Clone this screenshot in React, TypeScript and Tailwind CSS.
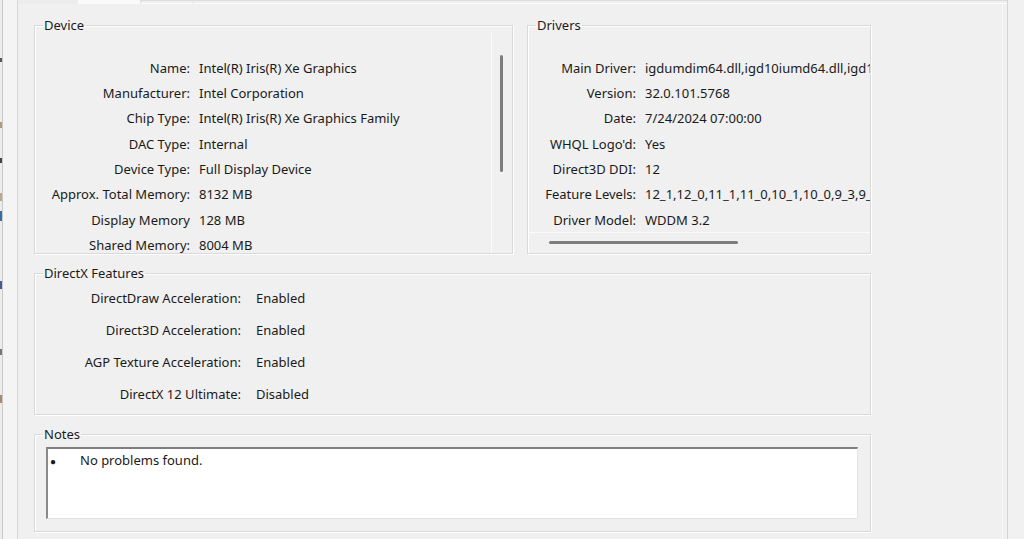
import React from "react";

const deviceRows: [string, string][] = [
  ["Name:", "Intel(R) Iris(R) Xe Graphics"],
  ["Manufacturer:", "Intel Corporation"],
  ["Chip Type:", "Intel(R) Iris(R) Xe Graphics Family"],
  ["DAC Type:", "Internal"],
  ["Device Type:", "Full Display Device"],
  ["Approx. Total Memory:", "8132 MB"],
  ["Display Memory", "128 MB"],
  ["Shared Memory:", "8004 MB"],
];

const driverRows: [string, string][] = [
  ["Main Driver:", "igdumdim64.dll,igd10iumd64.dll,igd10iumd64.dll,igd12umd64.dll"],
  ["Version:", "32.0.101.5768"],
  ["Date:", "7/24/2024 07:00:00"],
  ["WHQL Logo'd:", "Yes"],
  ["Direct3D DDI:", "12"],
  ["Feature Levels:", "12_1,12_0,11_1,11_0,10_1,10_0,9_3,9_2,9_1"],
  ["Driver Model:", "WDDM 3.2"],
];

const featureRows: [string, string][] = [
  ["DirectDraw Acceleration:", "Enabled"],
  ["Direct3D Acceleration:", "Enabled"],
  ["AGP Texture Acceleration:", "Enabled"],
  ["DirectX 12 Ultimate:", "Disabled"],
];

function Group({
  title,
  className,
  children,
}: {
  title: string;
  className: string;
  children: React.ReactNode;
}) {
  return (
    <fieldset
      className={`border border-[#d9d9d9] shadow-[inset_1px_1px_0_#ffffff,1px_1px_0_#ffffff] min-w-0 ${className}`}
    >
      <legend className="ml-[8px] px-[1px] leading-[16px]">{title}</legend>
      {children}
    </fieldset>
  );
}

export default function App() {
  return (
    <div
      className="w-[1024px] h-[539px] overflow-hidden bg-[#f0f0f0] flex text-[13px] text-[#1a1a1a]"
      style={{ fontFamily: '"Noto Sans", "Open Sans", sans-serif' }}
    >
      {/* sliver of the window behind */}
      <div className="w-[3px] h-full border-r border-[#c9c9c9] bg-[#ececec] flex flex-col">
        <div className="h-[58px]" />
        <div className="h-[4px] bg-[#555]" />
        <div className="h-[60px]" />
        <div className="h-[6px] bg-[#b59a7a]" />
        <div className="h-[30px]" />
        <div className="h-[5px] bg-[#444]" />
        <div className="h-[30px]" />
        <div className="h-[8px] bg-[#c2a68a]" />
        <div className="h-[10px]" />
        <div className="h-[10px] bg-[#3b6ea0]" />
        <div className="h-[60px]" />
        <div className="h-[8px] bg-[#4a5a8a]" />
        <div className="h-[60px]" />
        <div className="h-[6px] bg-[#777]" />
        <div className="h-[40px]" />
        <div className="h-[8px] bg-[#a08a70]" />
      </div>
      <div className="w-[15px] h-full bg-[#f4f4f4] border-r border-[#d6d6d6]" />

      {/* tab page */}
      <div className="w-[990px] h-full flex flex-col border-r border-[#d4d4d4]">
        {/* bottoms of the tab headers */}
        <div className="h-[4px] flex shrink-0">
          <div className="w-[60px] bg-[#ececec]" />
          <div className="w-[62px] bg-[#fafafa]" />
          <div className="w-[53px] border-t border-[#dcdcdc] border-l border-l-[#e2e2e2] border-b border-b-[#fafafa]" />
          <div className="w-[50px] border-t border-[#dcdcdc] border-l border-l-[#e2e2e2] border-b border-b-[#fafafa]" />
          <div className="flex-1 border-t border-[#dcdcdc] border-b border-b-[#fafafa]" />
        </div>

        <div className="flex-1 flex flex-col pl-[16px] pt-[13px] border-r border-[#f8f8f8] mr-[4px]">
          {/* Device + Drivers */}
          <div className="flex gap-[14px]">
            <Group title="Device" className="w-[479px] h-[237px]">
              <div className="flex h-[220px]">
                <div className="flex-1 pt-[23px]">
                  {deviceRows.map(([k, v]) => (
                    <div key={k} className="h-[25.3px] flex items-center">
                      <div className="w-[155px] text-right whitespace-nowrap">{k}</div>
                      <div className="ml-[9px] whitespace-nowrap">{v}</div>
                    </div>
                  ))}
                </div>
                {/* vertical scroll bar */}
                <div className="w-[21px] border-l border-[#fbfbfb] pt-[22px] pl-[8px]">
                  <div className="w-[3px] h-[117px] bg-[#7d7d7d] rounded-full" />
                </div>
              </div>
            </Group>

            <Group title="Drivers" className="w-[344px] h-[237px]">
              <div className="flex flex-col h-[220px] overflow-hidden">
                <div className="h-[200px] pt-[23px] border-b border-[#fbfbfb] overflow-hidden">
                  {driverRows.map(([k, v]) => (
                    <div key={k} className="h-[25.3px] flex items-center">
                      <div className="w-[108px] shrink-0 text-right whitespace-nowrap">{k}</div>
                      <div className="ml-[9px] whitespace-nowrap">{v}</div>
                    </div>
                  ))}
                </div>
                {/* horizontal scroll bar */}
                <div className="pt-[8px] pl-[21px]">
                  <div className="w-[189px] h-[3px] bg-[#7d7d7d] rounded-full" />
                </div>
              </div>
            </Group>
          </div>

          {/* DirectX Features */}
          <Group title="DirectX Features" className="mt-[11px] w-[837px] h-[150px]">
            <div className="pt-[2px]">
              {featureRows.map(([k, v]) => (
                <div key={k} className="h-[32px] flex items-center">
                  <div className="w-[206px] text-right whitespace-nowrap">{k}</div>
                  <div className="ml-[15px] whitespace-nowrap">{v}</div>
                </div>
              ))}
            </div>
          </Group>

          {/* Notes */}
          <Group title="Notes" className="mt-[11px] w-[837px] h-[106px]">
            <div className="ml-[11px] mt-[5px] w-[812px] h-[72px] bg-white border-t-2 border-l-2 border-t-[#7e7e7e] border-l-[#8a8a8a] border-r border-b border-r-[#e4e4e4] border-b-[#e4e4e4]">
              <div className="flex items-center h-[24px]">
                <span className="w-[7px] ml-[2px] text-[10px]">●</span>
                <span className="ml-[23px]">No problems found.</span>
              </div>
            </div>
          </Group>
        </div>
      </div>
      <div className="flex-1 bg-[#f1f1f1]" />
    </div>
  );
}
